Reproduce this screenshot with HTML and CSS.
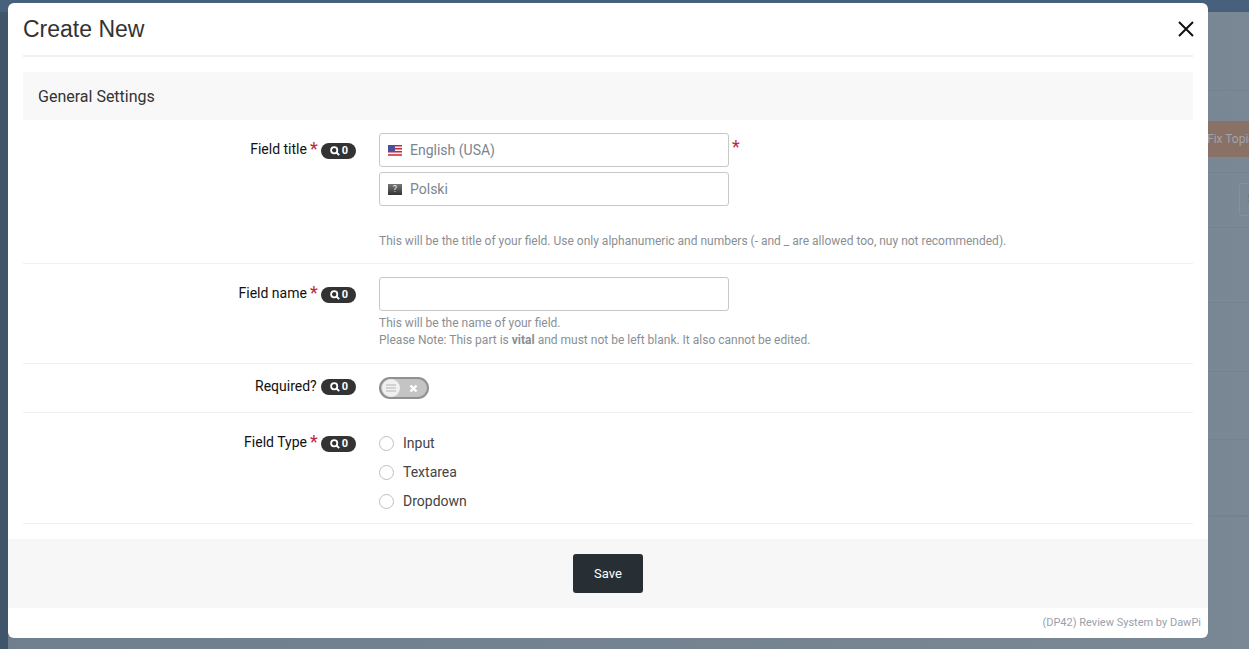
FILE: index.html
```html
<!DOCTYPE html>
<html lang="en">
<head>
  <meta charset="UTF-8">
  <title>Create New</title>
  <link rel="stylesheet" href="styles.css">
</head>
<body>

  <!-- page behind the dialog -->
  <div class="page">
    <div class="page-top"></div>
    <div class="page-head"></div>
    <div class="page-actions"><span class="fix-topic">Fix Topic</span></div>
    <div class="page-tools"><span class="tool-btn">S</span></div>
    <div class="page-row row-a"></div>
    <div class="page-row row-b"></div>
    <div class="page-row row-c"></div>
    <div class="page-row row-d"></div>
  </div>

  <div class="modal">
    <div class="modal-header">
      <h1>Create New</h1>
      <svg class="close-icon" width="16" height="16" viewBox="0 0 16 16"><path d="M1 1L15 15M15 1L1 15" stroke="#111" stroke-width="2" fill="none"/></svg>
    </div>

    <div class="modal-body">
      <h2 class="section-title">General Settings</h2>

      <div class="form-row row-title">
        <div class="label-col">
          <span class="label-text">Field title</span><span class="req">*</span>
          <span class="pill"><svg width="10" height="10" viewBox="0 0 10 10"><circle cx="4.2" cy="4.2" r="3.1" stroke="#fff" stroke-width="1.8" fill="none"/><path d="M6.5 6.5L9.2 9.2" stroke="#fff" stroke-width="1.9"/></svg>0</span>
        </div>
        <div class="field-col">
          <div class="lang-line">
            <div class="text-box lang-box">
              <svg class="flag" width="14" height="11" viewBox="0 0 14 11">
                <rect width="14" height="11" fill="#f2f2f2"/>
                <path d="M0 .75H14M0 3.75H14M0 6.75H14M0 9.9H14" stroke="#c8283c" stroke-width="1.5"/>
                <rect width="7" height="6" fill="#4a4f9c"/>
              </svg>
              <span>English (USA)</span>
            </div>
            <span class="req req-side">*</span>
          </div>
          <div class="text-box lang-box">
            <span class="flag unknown">?</span>
            <span>Polski</span>
          </div>
          <p class="help help-title">This will be the title of your field. Use only alphanumeric and numbers (- and _ are allowed too, nuy not recommended).</p>
        </div>
      </div>

      <div class="form-row row-name">
        <div class="label-col">
          <span class="label-text">Field name</span><span class="req">*</span>
          <span class="pill"><svg width="10" height="10" viewBox="0 0 10 10"><circle cx="4.2" cy="4.2" r="3.1" stroke="#fff" stroke-width="1.8" fill="none"/><path d="M6.5 6.5L9.2 9.2" stroke="#fff" stroke-width="1.9"/></svg>0</span>
        </div>
        <div class="field-col">
          <div class="text-box"></div>
          <p class="help">This will be the name of your field.<br>Please Note: This part is <b>vital</b> and must not be left blank. It also cannot be edited.</p>
        </div>
      </div>

      <div class="form-row row-required">
        <div class="label-col">
          <span class="label-text">Required?</span>
          <span class="pill"><svg width="10" height="10" viewBox="0 0 10 10"><circle cx="4.2" cy="4.2" r="3.1" stroke="#fff" stroke-width="1.8" fill="none"/><path d="M6.5 6.5L9.2 9.2" stroke="#fff" stroke-width="1.9"/></svg>0</span>
        </div>
        <div class="field-col">
          <div class="toggle">
            <span class="knob"><svg width="10" height="8" viewBox="0 0 10 8"><path d="M0 1H10M0 4H10M0 7H10" stroke="#b5b5b5" stroke-width="1"/></svg></span>
            <svg class="toggle-x" width="9" height="9" viewBox="0 0 9 9"><path d="M1.5 1.5L7.5 7.5M7.5 1.5L1.5 7.5" stroke="#fff" stroke-width="2.4"/></svg>
          </div>
        </div>
      </div>

      <div class="form-row row-type">
        <div class="label-col">
          <span class="label-text">Field Type</span><span class="req">*</span>
          <span class="pill"><svg width="10" height="10" viewBox="0 0 10 10"><circle cx="4.2" cy="4.2" r="3.1" stroke="#fff" stroke-width="1.8" fill="none"/><path d="M6.5 6.5L9.2 9.2" stroke="#fff" stroke-width="1.9"/></svg>0</span>
        </div>
        <div class="field-col radios">
          <label class="radio"><span class="dot"></span>Input</label>
          <label class="radio"><span class="dot"></span>Textarea</label>
          <label class="radio"><span class="dot"></span>Dropdown</label>
        </div>
      </div>
    </div>

    <div class="modal-footer">
      <button class="save-btn">Save</button>
    </div>
    <div class="credit">(DP42) Review System by DawPi</div>
  </div>

</body>
</html>
```

FILE: styles.css
```css
* {
  box-sizing: border-box;
}

html, body {
  height: 100%;
}

body {
  margin: 0;
  overflow: hidden;
  font-family: Roboto, "Liberation Sans", sans-serif;
  font-size: 14px;
  color: #212529;
  background-color: #7a8794;
}

/* background page, dimmed by the dialog's backdrop */
.page {
  height: 649px;
  background: linear-gradient(to right, #40556a 0, #40556a 8px, #6f7f8e 8px, #7a8794 100%);
}

.page-top {
  height: 12px;
  background-color: #47617c;
}

.page-head,
.page-actions,
.page-tools,
.page-row {
  margin-left: 8px;
  border-bottom: 1px solid #74818e;
}

.page-head {
  height: 79px;
}

.page-actions {
  height: 82px;
  padding-top: 30px;
}

.fix-topic {
  display: block;
  height: 36px;
  margin-left: 1187px;
  padding: 10px 0 0 12px;
  background-color: #8a7166;
  color: #a0a3ae;
  font-size: 12px;
  line-height: 16px;
  white-space: nowrap;
  overflow: hidden;
}

.page-tools {
  height: 55px;
  padding: 10px 0 0 1231px;
}

.tool-btn {
  display: block;
  width: 20px;
  height: 33px;
  border: 1px solid #84909b;
  border-radius: 3px;
  padding: 7px 0 0 7px;
  color: #6c7782;
  font-size: 13px;
  overflow: hidden;
}

.row-a { height: 75px; }
.row-b { height: 69px; }
.row-c { height: 68px; }
.row-d { height: 77px; border-bottom-width: 2px; }

/* dialog */
.modal {
  position: absolute;
  top: 3px;
  left: 8px;
  width: 1200px;
  height: 635px;
  background-color: #fff;
  border-radius: 6px;
  display: flex;
  flex-direction: column;
}

.modal-header {
  display: flex;
  justify-content: space-between;
  align-items: center;
  height: 54px;
  margin: 0 15px;
  border-bottom: 2px solid #f0f0f0;
}

.modal-header h1 {
  margin: 0;
  font-family: "Liberation Sans", Arial, sans-serif;
  font-size: 23px;
  font-weight: 400;
  color: #333;
}

.close-icon {
  margin-right: -1px;
}

.modal-body {
  flex: 1;
  margin: 0 15px;
  padding-top: 15px;
}

.section-title {
  margin: 0;
  height: 48px;
  padding: 15px 15px 0;
  background-color: #f8f8f8;
  font-size: 16px;
  font-weight: 400;
  line-height: 19px;
  color: #333;
}

.form-row {
  display: flex;
  border-bottom: 1px solid #f0f0f0;
}

.row-title { height: 144px; padding-top: 13px; }
.row-name { height: 100px; padding-top: 13px; }
.row-required { height: 49px; padding-top: 13px; }
.row-type { height: 111px; padding-top: 20px; }

.label-col {
  width: 333px;
  display: flex;
  justify-content: flex-end;
  align-items: flex-start;
  line-height: 20px;
  font-size: 14px;
  color: #111;
}

.row-title .label-col,
.row-name .label-col {
  padding-top: 6px;
}

.row-required .label-col,
.row-type .label-col {
  margin-top: -1px;
}

.req {
  margin-left: 3px;
  color: #c0263c;
  font-size: 18px;
  line-height: 20px;
}

.pill {
  display: inline-flex;
  align-items: center;
  gap: 2px;
  height: 16px;
  margin: 4px 0 0 3px;
  padding: 0 8px 0 9px;
  border-radius: 8px;
  background-color: #333;
  color: #fff;
  font-size: 11px;
  font-weight: 700;
}

.row-required .pill {
  margin: 3px 0 0 4px;
}

.field-col {
  margin-left: 23px;
  flex: 1;
}

.lang-line {
  display: flex;
}

.text-box {
  width: 350px;
  height: 34px;
  border: 1px solid #c8c8c8;
  border-radius: 3px;
  background-color: #fff;
}

.lang-box {
  display: flex;
  align-items: center;
  gap: 8px;
  margin-bottom: 5px;
  padding-left: 8px;
  color: #7b8590;
  font-size: 14px;
}

.req-side {
  margin-top: 4px;
}

.flag {
  flex: none;
}

.unknown {
  display: block;
  width: 14px;
  height: 11px;
  background: linear-gradient(#777, #333);
  color: #eee;
  font-size: 9px;
  line-height: 11px;
  text-align: center;
}

.help {
  margin: 4px 0 0;
  color: #8a8f94;
  font-size: 12px;
  line-height: 17px;
}

.help-title {
  margin-top: 27px;
}

.toggle {
  display: flex;
  align-items: center;
  width: 50px;
  height: 22px;
  padding-left: 1px;
  border: 2px solid #909090;
  border-radius: 11px;
  background-color: #c4c4c4;
}

.knob {
  display: flex;
  align-items: center;
  justify-content: center;
  width: 18px;
  height: 18px;
  border-radius: 50%;
  background-color: #f0f0f0;
}

.toggle-x {
  margin-left: 9px;
}

.radios {
  display: flex;
  flex-direction: column;
  gap: 9px;
}

.radio {
  display: flex;
  align-items: center;
  height: 20px;
  color: #444;
  font-size: 14px;
}

.dot {
  width: 15px;
  height: 15px;
  margin-right: 9px;
  border: 1px solid #c0c0c0;
  border-radius: 50%;
}

.modal-footer {
  display: flex;
  justify-content: center;
  align-items: center;
  height: 69px;
  background-color: #f7f7f7;
}

.save-btn {
  width: 70px;
  height: 39px;
  border: none;
  border-radius: 3px;
  background-color: #272e34;
  color: #fff;
  font-family: Roboto, sans-serif;
  font-size: 13px;
}

.credit {
  height: 30px;
  padding: 8px 7px 0 0;
  text-align: right;
  color: #9aa1ab;
  font-size: 11px;
}
```
